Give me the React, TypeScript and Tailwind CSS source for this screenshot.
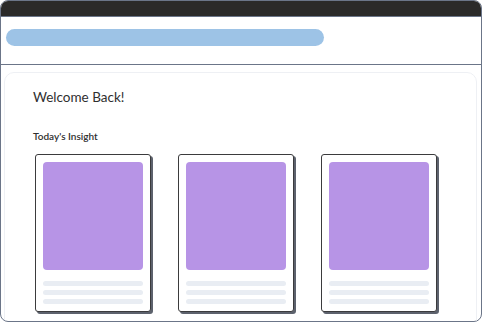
const font = { fontFamily: 'Lato, "Noto Sans", sans-serif' };

function InsightCard() {
  return (
    <div className="w-[116px] h-[158px] rounded-[3px] border border-[#3b3b3d] bg-white p-[7px] shadow-[2px_2px_0_#5d626d]">
      <div className="h-[108px] rounded-[4px] bg-[#b794e6]" />
      <div className="mt-[11px] flex flex-col gap-[4px]">
        <div className="h-[5px] rounded-full bg-[#e9edf3]" />
        <div className="h-[5px] rounded-full bg-[#e9edf3]" />
        <div className="h-[5px] rounded-full bg-[#e9edf3]" />
      </div>
    </div>
  );
}

export default function App() {
  return (
    <div
      className="w-[482px] h-[322px] overflow-hidden rounded-[8px] border border-[#6b7588] bg-white flex flex-col"
      style={font}
    >
      {/* window bar */}
      <div className="h-[16px] shrink-0 bg-[#2b2a29] border-b border-[#6b7588]" />

      {/* header */}
      <div className="h-[48px] shrink-0 border-b border-[#6b7588] px-[5px] pt-[12px]">
        <div className="w-[318px] h-[17px] rounded-full bg-[#9dc3e6]" />
      </div>

      {/* content */}
      <div className="flex-1 px-[3px] pr-[4px] pt-[7px]">
        <div className="h-[300px] rounded-[10px] border border-[#eef0f4] pl-[28px] pt-[15px]">
          <h1 className="text-[13.5px] leading-[18px] text-[#2f2f2f]">Welcome Back!</h1>
          <h2 className="mt-[23px] text-[10px] leading-[14px] font-semibold text-[#2f2f2f]">Today's Insight</h2>
          <div className="mt-[11px] ml-[2px] flex gap-[27px]">
            <InsightCard />
            <InsightCard />
            <InsightCard />
          </div>
        </div>
      </div>
    </div>
  );
}
